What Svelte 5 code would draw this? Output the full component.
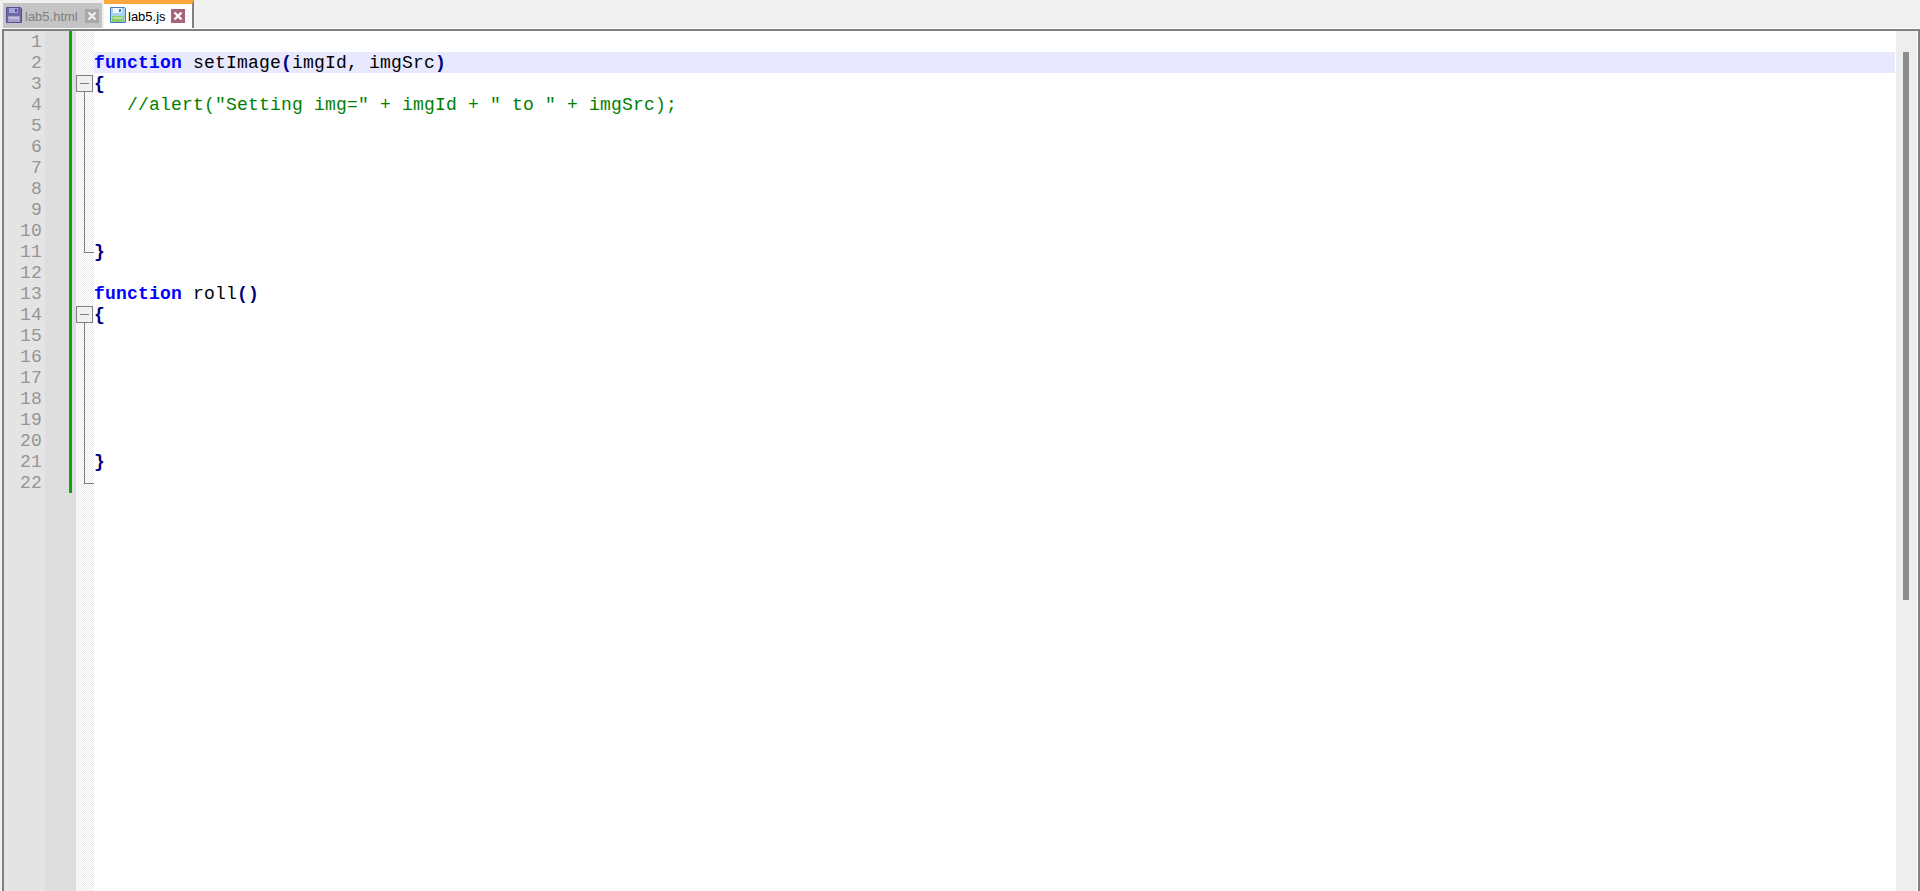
<script>
  const nums = Array.from({ length: 22 }, (_, i) => i + 1);
  const foldMarks = { 3: 'box', 11: 'end', 14: 'box', 22: 'end' };
  const inFold = (n) => (n > 3 && n < 11) || (n > 14 && n < 22);
  const commentText = '   //alert("Setting img=" + imgId + " to " + imgSrc);';
</script>

{#snippet floppy(outline, body, shutter, label)}
  <svg class="floppy" width="16" height="16" viewBox="0 0 16 16">
    <path d="M.5.5h14l1 1v14H.5z" fill={body} stroke={outline} />
    <rect x="3" y="1" width="9" height="5" fill={shutter} />
    <rect x="9" y="2" width="2" height="3" fill={outline} />
    <rect x="2" y="9" width="12" height="6" fill={label} />
    <path d="M3 11h10" stroke="#fff" stroke-opacity=".7" />
  </svg>
{/snippet}

<div class="app">
  <div class="tabbar">
    <div class="tab inactive">
      {@render floppy('#5a4f90', '#6f68a8', '#9fa6d8', '#a8a0c8')}
      <span class="title">lab5.html</span>
      <span class="close grey">
        <svg width="10" height="10" viewBox="0 0 10 10"><path d="M1.5 1.5l7 7M8.5 1.5l-7 7" stroke="#eee" stroke-width="2.4" /></svg>
      </span>
    </div>
    <div class="tab active">
      {@render floppy('#3f7cc0', '#a8d0f0', '#f4f8fc', '#8ccf6a')}
      <span class="title">lab5.js</span>
      <span class="close red">
        <svg width="10" height="10" viewBox="0 0 10 10"><path d="M1.5 1.5l7 7M8.5 1.5l-7 7" stroke="#fff" stroke-width="2.4" /></svg>
      </span>
    </div>
  </div>

  <div class="editor">
    <div class="numbers">
      {#each nums as n}<div class="line">{n}</div>{/each}
    </div>
    <div class="symbols"></div>
    <div class="change"><div class="change-bar"></div></div>
    <div class="gap"></div>
    <div class="fold">
      {#each nums as n}
        <div class="line fold-cell">
          {#if foldMarks[n] === 'box'}
            <span class="fold-box"></span>
          {:else if foldMarks[n] === 'end'}
            <span class="fold-end"></span>
          {:else if inFold(n)}
            <span class="fold-line"></span>
          {/if}
        </div>
      {/each}
    </div>
    <div class="code">
      <div class="line"></div>
      <div class="line current"><b class="kw">function</b> setImage<b class="op">(</b>imgId, imgSrc<b class="op">)</b></div>
      <div class="line"><b class="op">&#123;</b></div>
      <div class="line comment">{commentText}</div>
      {#each [5, 6, 7, 8, 9, 10] as _}<div class="line"></div>{/each}
      <div class="line"><b class="op">&#125;</b></div>
      <div class="line"></div>
      <div class="line"><b class="kw">function</b> roll<b class="op">()</b></div>
      <div class="line"><b class="op">&#123;</b></div>
      {#each [15, 16, 17, 18, 19, 20] as _}<div class="line"></div>{/each}
      <div class="line"><b class="op">&#125;</b></div>
      <div class="line"></div>
    </div>
    <div class="scrollbar"><div class="thumb"></div></div>
  </div>
</div>

<style>
  :global(body) {
    margin: 0;
    overflow: hidden;
    background: #f0f0f0;
  }
  .app {
    height: 891px;
    display: flex;
    flex-direction: column;
    background: #f0f0f0;
  }
  .tabbar {
    height: 29px;
    flex: none;
    display: flex;
    align-items: flex-start;
    padding-left: 3px;
    box-sizing: border-box;
    border-bottom: 1px solid #fff;
    font-family: "Liberation Sans", Arial, sans-serif;
    font-size: 13px;
  }
  .tab {
    display: flex;
    align-items: center;
    box-sizing: border-box;
  }
  .inactive {
    width: 99px;
    height: 25px;
    margin-top: 3px;
    margin-right: 2px;
    padding-left: 3px;
    background: #c4c4c4;
    color: #808080;
  }
  .active {
    width: 90px;
    height: 28px;
    padding: 0 0 1px 6px;
    background: #fff;
    color: #000;
    border-top: 4px solid #faa73e;
    border-right: 2px solid #808080;
  }
  .floppy { flex: none; margin-right: 3px; margin-top: -1px; }
  .active .floppy { margin-right: 2px; }
  .title { flex: 1; white-space: nowrap; padding-top: 2px; }
  .close {
    flex: none;
    width: 14px;
    height: 14px;
    display: flex;
    align-items: center;
    justify-content: center;
  }
  .close.grey { background: #a8a8a8; margin-right: 3px; }
  .close.red { background: #a8627a; margin-right: 7px; }

  .editor {
    flex: 1;
    display: flex;
    min-height: 0;
    border-top: 2px solid #808080;
    border-left: 2px solid #808080;
    border-right: 2px solid #808080;
    margin-left: 2px;
    background: #fff;
    font-family: "Liberation Mono", "Courier New", monospace;
    font-size: 18px;
    letter-spacing: 0.2px;
  }
  .line {
    height: 21px;
    line-height: 23px;
    white-space: pre;
  }
  .numbers {
    flex: none;
    width: 38px;
    padding-right: 3px;
    background: #e4e4e4;
    color: #959595;
    text-align: right;
  }
  .symbols {
    flex: none;
    width: 24px;
    background: #dedede;
  }
  .change {
    flex: none;
    width: 3px;
    background: #dedede;
  }
  .change-bar {
    height: 462px;
    background: #0ca50c;
  }
  .gap {
    flex: none;
    width: 4px;
    background: #dedede;
  }
  .fold {
    flex: none;
    width: 18px;
    background: repeating-conic-gradient(#ececec 0 25%, #fff 0 50%) 0 0 / 2px 2px;
  }
  .fold-cell {
    position: relative;
  }
  .fold-box {
    position: absolute;
    left: 0;
    top: 2px;
    width: 15px;
    height: 15px;
    border: 1px solid #808080;
    background: linear-gradient(#808080, #808080) center / 9px 1px no-repeat #f0f0f0;
  }
  .fold-line {
    position: absolute;
    left: 8px;
    top: 0;
    bottom: 0;
    width: 1px;
    background: #808080;
  }
  .fold-box::after {
    content: "";
    position: absolute;
    left: 7px;
    top: 16px;
    width: 1px;
    height: 3px;
    background: #808080;
  }
  .fold-end {
    position: absolute;
    left: 8px;
    top: 0;
    width: 9px;
    height: 11px;
    border-left: 1px solid #808080;
    border-bottom: 1px solid #808080;
  }
  .code {
    flex: 1;
    min-width: 0;
    color: #000;
    padding-right: 1px;
  }
  .current { background: #e8e8ff; }
  .kw { color: #0000ff; font-weight: bold; }
  .op { color: #000080; font-weight: bold; }
  .comment { color: #008000; }
  .scrollbar {
    flex: none;
    width: 21px;
    background: #eeeeee;
    border-right: 1px solid #fff;
  }
  .thumb {
    margin: 21px 0 0 7px;
    width: 6px;
    height: 548px;
    background: #8c8c8c;
  }
</style>
